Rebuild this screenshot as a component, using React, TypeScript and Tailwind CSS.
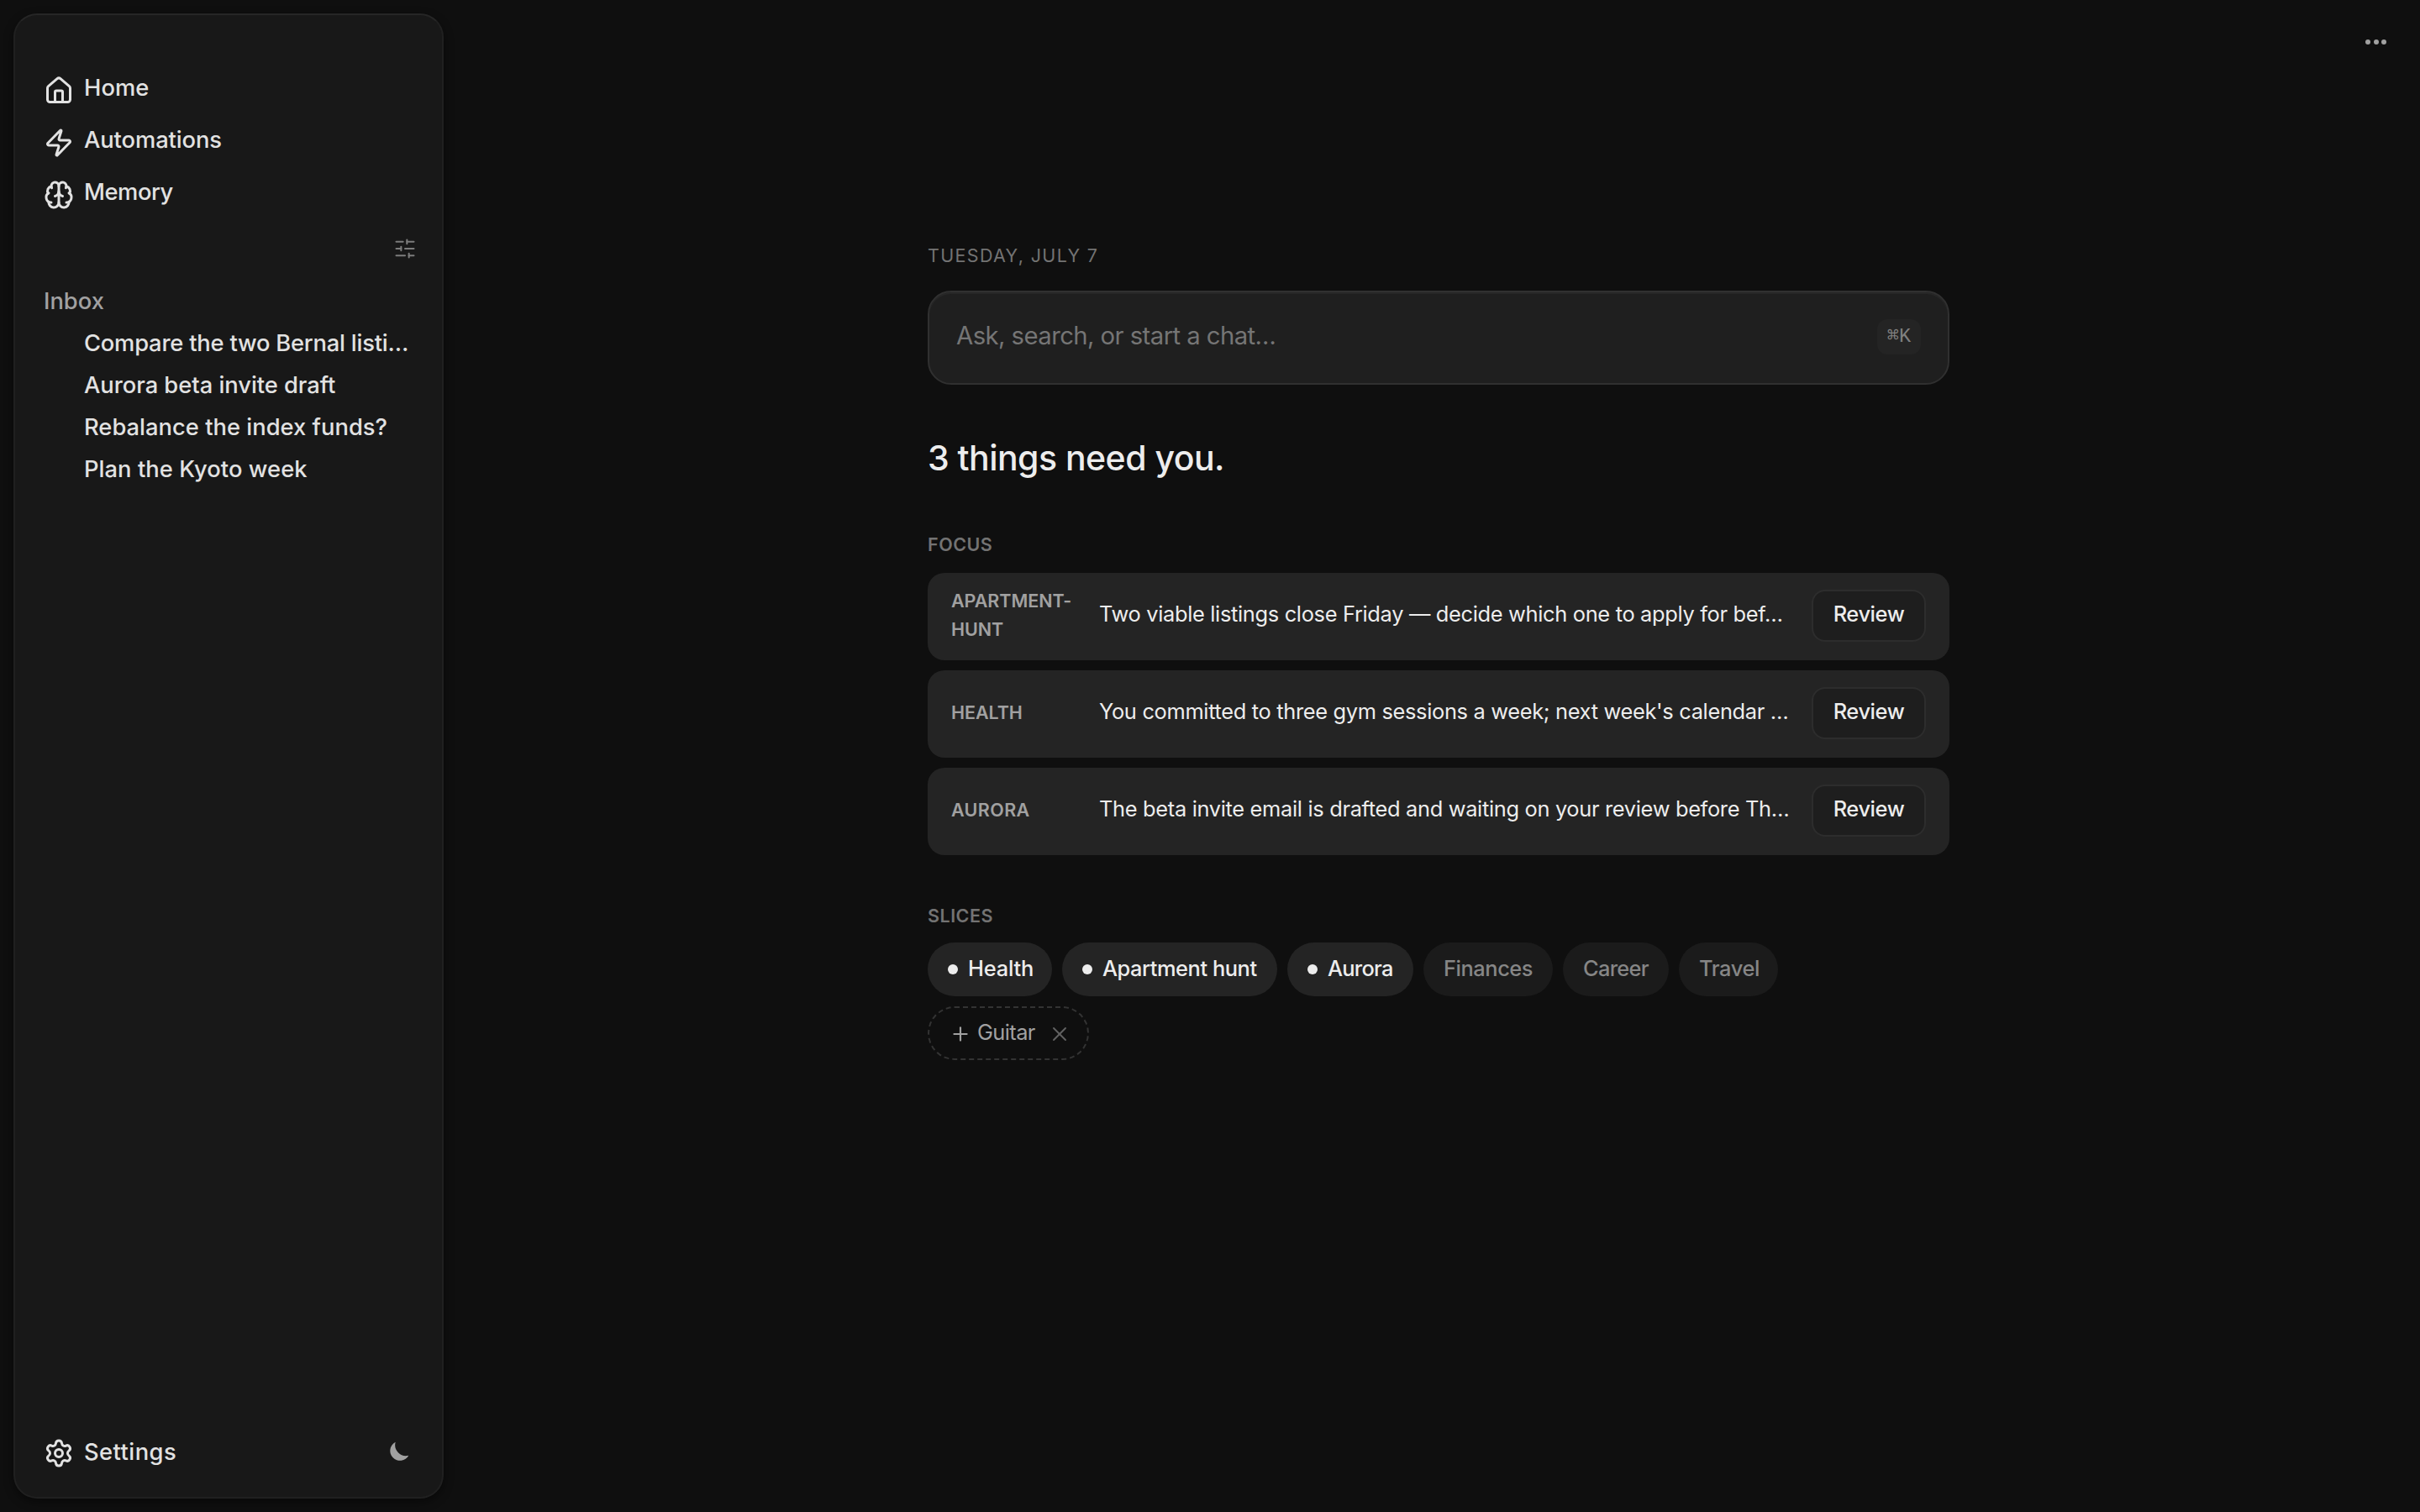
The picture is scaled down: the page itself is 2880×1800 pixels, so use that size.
import React from "react";
import { Brain, House, Plus, Settings, SlidersHorizontal, X, Zap, type LucideIcon } from "lucide-react";

type NavItem = { label: string; icon: LucideIcon; tracking: string };

const NAV: NavItem[] = [
  { label: "Home", icon: House, tracking: "tracking-[0.08px]" },
  { label: "Automations", icon: Zap, tracking: "tracking-[-0.08px]" },
  { label: "Memory", icon: Brain, tracking: "tracking-[-0.43px]" },
];

const INBOX = [
  { title: "Compare the two Bernal listi…", tracking: "tracking-[-0.2px]" },
  { title: "Aurora beta invite draft", tracking: "tracking-[-0.02px]" },
  { title: "Rebalance the index funds?", tracking: "tracking-[0.03px]" },
  { title: "Plan the Kyoto week", tracking: "tracking-[0.07px]" },
];

const FOCUS = [
  {
    slice: "APARTMENT-HUNT",
    text: "Two viable listings close Friday — decide which one to apply for bef…",
    tracking: "tracking-[-0.05px]",
  },
  {
    slice: "HEALTH",
    text: "You committed to three gym sessions a week; next week's calendar …",
    tracking: "tracking-[-0.05px]",
  },
  {
    slice: "AURORA",
    text: "The beta invite email is drafted and waiting on your review before Th…",
    tracking: "tracking-[0.4px]",
  },
];

const SLICES = [
  { label: "Health", active: true, size: "w-[148px] tracking-[-0.18px]" },
  { label: "Apartment hunt", active: true, size: "w-[256px] tracking-[-0.45px]" },
  { label: "Aurora", active: true, size: "w-[150px] tracking-[-0.73px]" },
  { label: "Finances", active: false, size: "w-[154px] tracking-[-0.44px]" },
  { label: "Career", active: false, size: "w-[126px] tracking-[-0.7px]" },
  { label: "Travel", active: false, size: "w-[118px] tracking-[-0.38px]" },
];

function MoonIcon() {
  return (
    <svg viewBox="0 0 24 24" className="size-6 fill-[#a1a1a1]">
      <path d="M7.7 .7A12.9 12.9 0 0 0 23.3 16.7 11.7 11.7 0 1 1 7.7 .7Z" />
    </svg>
  );
}

function Sidebar() {
  return (
    <aside className="flex w-[512px] shrink-0 flex-col rounded-[28px] border-2 border-[#202020] border-t-[#262626] bg-[#181818] pt-[55px] pb-[23px] pl-[34px] text-[27.3px] font-medium text-[#e2e2e2] shadow-[0_4px_12px_rgba(0,0,0,0.45)]">
      <nav className="flex flex-col">
        {NAV.map(({ label, icon: Icon, tracking }) => (
          <a key={label} className="flex h-[62px] items-center gap-3">
            <Icon size={36} strokeWidth={2} className="mt-2" />
            <span className={`pt-0.5 ${tracking}`}>{label}</span>
          </a>
        ))}
      </nav>
      <div className="mt-[23px] flex justify-end pr-[30px]">
        <SlidersHorizontal size={28} strokeWidth={1.75} className="text-[#7c7c7c]" />
      </div>
      <h2 className="mt-6 leading-[50px] text-[#a1a1a1]">Inbox</h2>
      <ul className="pl-12">
        {INBOX.map((item) => (
          <li key={item.title} className="leading-[50px] whitespace-nowrap">
            <span className={item.tracking}>{item.title}</span>
          </li>
        ))}
      </ul>
      <div className="mt-auto flex h-[62px] items-center gap-3 pr-[39px]">
        <Settings size={36} strokeWidth={2} className="mt-1" />
        <span className="flex-1 pt-0.5 tracking-[0.47px]">Settings</span>
        <MoonIcon />
      </div>
    </aside>
  );
}

function SectionLabel({ children, className }: { children: string; className: string }) {
  return (
    <h2 className={`text-[21.5px] leading-8 font-semibold tracking-[0.5px] text-[#737373] ${className}`}>
      {children}
    </h2>
  );
}

function PromptBar() {
  return (
    <div className="mt-[26px] flex h-28 items-center justify-between rounded-[28px] border-2 border-[#303030] bg-[#1f1f1f] px-8 shadow-[inset_0_2px_0_#272727]">
      <span className="pb-[5px] text-[29.3px] tracking-[-0.57px] text-[#757575]">Ask, search, or start a chat…</span>
      <kbd className="mb-0.5 flex h-[42px] w-[52px] items-center justify-center rounded-xl bg-[#242424] pb-px font-['Liberation_Mono','DejaVu_Sans_Mono',monospace] text-[23.5px] text-[#808080]">
        ⌘K
      </kbd>
    </div>
  );
}

function FocusList() {
  return (
    <ul className="mt-[18px] flex flex-col gap-3">
      {FOCUS.map((item) => (
        <li key={item.slice} className="flex h-[104px] items-center gap-7 rounded-[20px] bg-[#242424] px-7 pb-0.5">
          <span
            className={`w-[148px] shrink-0 text-[21.5px] leading-[33.7px] font-semibold text-[#a1a1a1] ${item.tracking}`}
          >
            {item.slice}
          </span>
          <p className="min-w-0 flex-1 pb-[3px] text-[25.4px] tracking-[-0.32px] whitespace-nowrap">{item.text}</p>
          <button className="h-[62px] w-[136px] shrink-0 rounded-2xl border-2 border-[#2d2d2d] bg-[#1e1e1e] pb-[3px] text-[25.4px] font-medium tracking-[-0.4px]">
            Review
          </button>
        </li>
      ))}
    </ul>
  );
}

function SliceChips() {
  return (
    <div className="mt-4 flex flex-wrap gap-3 pr-5 text-[25.4px] font-medium">
      {SLICES.map(({ label, active, size }) => (
        <span
          key={label}
          className={`flex h-16 items-center gap-3 rounded-full pl-6 whitespace-nowrap ${size} ${
            active ? "bg-[#242424]" : "bg-[#1b1b1b] text-[#868686]"
          }`}
        >
          {active && <span className="size-3 shrink-0 rounded-full bg-[#ededed]" />}
          <span className="pb-px">{label}</span>
        </span>
      ))}
      <span className="flex h-16 w-48 items-center rounded-full border-2 border-dashed border-[#333333] pl-6 font-normal text-[#a1a1a1]">
        <Plus size={26} strokeWidth={2} className="mt-0.5 shrink-0" />
        <span className="pb-px pl-[7px] tracking-[-0.6px]">Guitar</span>
        <X size={28} strokeWidth={1.6} className="mt-0.5 mr-[19px] ml-auto shrink-0 text-[#626262]" />
      </span>
    </div>
  );
}

export default function App() {
  return (
    <div className="flex h-screen overflow-hidden bg-[#0f0f0f] py-4 pl-4 font-['Inter',sans-serif] text-[#ededed]">
      <Sidebar />
      <main className="relative flex flex-1 justify-center pl-4">
        <div className="w-[1216px] pt-[272px]">
          <p className="text-[21.5px] leading-8 tracking-[1.33px] text-[#737373]">TUESDAY, JULY 7</p>
          <PromptBar />
          <h1 className="mt-[59px] text-[41px] leading-[56px] font-medium tracking-[-0.53px]">3 things need you.</h1>
          <SectionLabel className="mt-[59px]">FOCUS</SectionLabel>
          <FocusList />
          <SectionLabel className="mt-14">SLICES</SectionLabel>
          <SliceChips />
        </div>
        <button aria-label="More" className="absolute top-[31px] right-10 flex gap-[3.5px]">
          <span className="size-1.5 rounded-full bg-[#a1a1a1]" />
          <span className="size-1.5 rounded-full bg-[#a1a1a1]" />
          <span className="size-1.5 rounded-full bg-[#a1a1a1]" />
        </button>
      </main>
    </div>
  );
}
